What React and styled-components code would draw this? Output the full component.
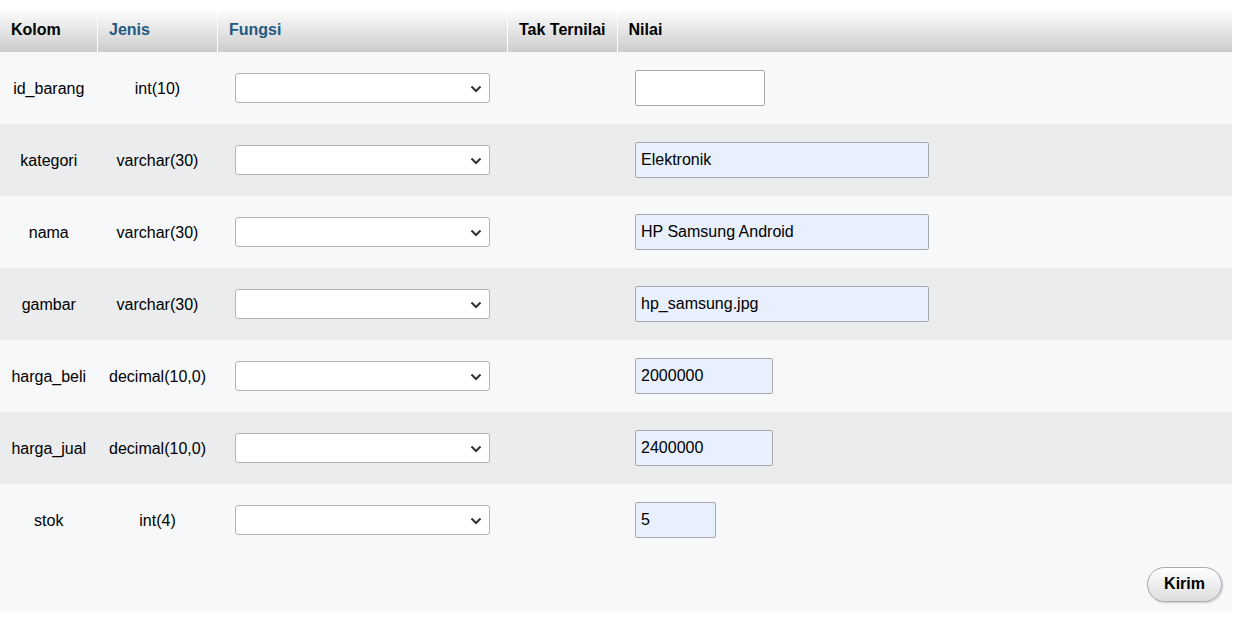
import React from 'react';
import styled, { createGlobalStyle } from 'styled-components';

const GlobalStyle = createGlobalStyle`
  body {
    margin: 0;
    background: #fff;
    font-family: "Liberation Sans", Arial, sans-serif;
    font-size: 16px;
    color: #000;
  }
`;

const Page = styled.div`
  padding: 8px 18px 0 0;
`;

const Table = styled.table`
  width: 1232px;
  border-collapse: collapse;
  border-spacing: 0;
`;

const Th = styled.th`
  height: 44px;
  padding: 0 11px;
  text-align: left;
  font-weight: bold;
  white-space: nowrap;
  color: ${p => (p.$link ? '#235a81' : '#000')};
  background: linear-gradient(#ffffff, #cccccc);
  border-left: ${p => (p.$first ? 'none' : '1px solid #fff')};
  width: ${p => p.$w || 'auto'};
`;

const Row = styled.tr`
  height: 72px;
  background: ${p => (p.$even ? '#ebecee' : '#f7f8fa')};
`;

const Td = styled.td`
  padding: ${p => (p.$text ? '1px' : '0')} 0 0;
  text-align: ${p => p.$align || 'center'};
  padding-left: ${p => p.$pl || '0'};
  white-space: nowrap;
  vertical-align: middle;
`;

const SelectWrap = styled.div`
  position: relative;
  display: inline-block;
  width: 255px;
  height: 30px;
  vertical-align: middle;
`;

const Select = styled.select`
  appearance: none;
  width: 100%;
  height: 100%;
  background: #fff;
  border: 1px solid #b5b5b5;
  border-radius: 3px;
  font-family: inherit;
  font-size: 16px;
`;

const Chevron = styled.svg`
  position: absolute;
  right: 8px;
  top: 12px;
  pointer-events: none;
`;

const Input = styled.input`
  box-sizing: border-box;
  width: ${p => p.$w}px;
  height: 36px;
  padding: 0 5px;
  border: 1px solid #a9a9a9;
  border-radius: 2px;
  background: ${p => (p.$filled ? '#e8f0fe' : '#fff')};
  font-family: inherit;
  font-size: 16px;
  color: #000;
  display: block;
`;

const FootRow = styled.tr`
  height: 56px;
  background: #f7f8fa;
`;

const FootCell = styled.td`
  text-align: right;
  padding-right: 10px;
`;

const Button = styled.button`
  height: 35px;
  padding: 0 16px;
  border: 1px solid #aaa;
  border-radius: 18px;
  background: linear-gradient(#ffffff, #dddddd);
  box-shadow: 1px 1px 2px rgba(0, 0, 0, 0.2);
  font-family: inherit;
  font-size: 16px;
  font-weight: bold;
  color: #000;
  cursor: pointer;
`;

const fields = [
  { name: 'id_barang', type: 'int(10)', value: '', w: 130 },
  { name: 'kategori', type: 'varchar(30)', value: 'Elektronik', w: 294 },
  { name: 'nama', type: 'varchar(30)', value: 'HP Samsung Android', w: 294 },
  { name: 'gambar', type: 'varchar(30)', value: 'hp_samsung.jpg', w: 294 },
  { name: 'harga_beli', type: 'decimal(10,0)', value: '2000000', w: 138 },
  { name: 'harga_jual', type: 'decimal(10,0)', value: '2400000', w: 138 },
  { name: 'stok', type: 'int(4)', value: '5', w: 81 },
];

export default function App() {
  return (
    <Page>
      <GlobalStyle />
      <Table>
        <thead>
          <tr>
            <Th $first $w="75px">Kolom</Th>
            <Th $link $w="97px">Jenis</Th>
            <Th $link $w="267px">Fungsi</Th>
            <Th $w="86px">Tak Ternilai</Th>
            <Th>Nilai</Th>
          </tr>
        </thead>
        <tbody>
          {fields.map((f, i) => (
            <Row key={f.name} $even={i % 2 === 1}>
              <Td $text>{f.name}</Td>
              <Td $text>{f.type}</Td>
              <Td>
                <SelectWrap>
                  <Select defaultValue="">
                    <option value=""></option>
                  </Select>
                  <Chevron width="12" height="8" viewBox="0 0 12 8">
                    <path d="M1.5 1.5 L6 6 L10.5 1.5" fill="none" stroke="#333" strokeWidth="2" />
                  </Chevron>
                </SelectWrap>
              </Td>
              <Td />
              <Td $align="left" $pl="18px">
                <Input $w={f.w} $filled={f.value !== ''} defaultValue={f.value} />
              </Td>
            </Row>
          ))}
          <FootRow>
            <FootCell colSpan={5}>
              <Button>Kirim</Button>
            </FootCell>
          </FootRow>
        </tbody>
      </Table>
    </Page>
  );
}
